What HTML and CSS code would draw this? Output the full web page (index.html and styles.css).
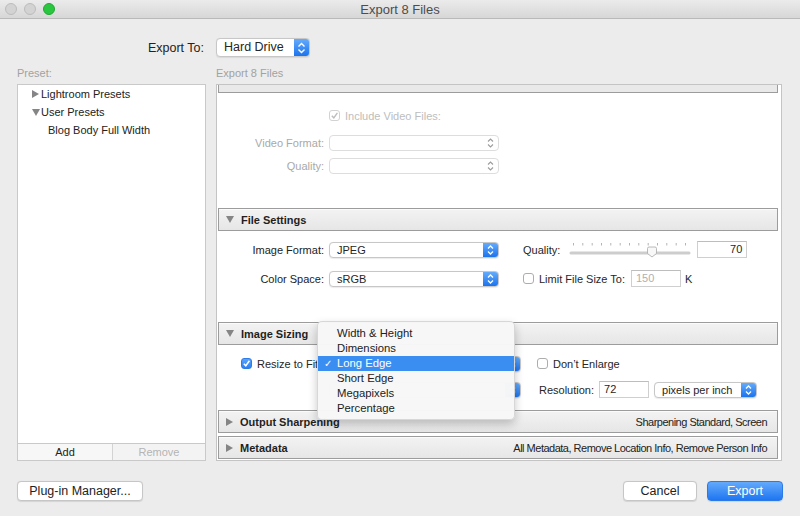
FILE: index.html
```html
<!DOCTYPE html>
<html>
<head>
<meta charset="utf-8">
<title>Export 8 Files</title>
<link rel="stylesheet" href="styles.css">
</head>
<body>
<div class="titlebar">
  <div class="lights"><span class="light"></span><span class="light"></span><span class="light green"></span></div>
  <div class="title">Export 8 Files</div>
  <div></div>
</div>

<div class="main">
  <div class="export-label">Export To:</div>
  <div class="popup big w-hd"><span class="val">Hard Drive</span><span class="step"><svg width="9" height="12" viewBox="0 0 9 12"><path d="M1.5 4.5 L4.5 1.5 L7.5 4.5 M1.5 7.5 L4.5 10.5 L7.5 7.5" fill="none" stroke="#fff" stroke-width="1.4"/></svg></span></div>

  <div class="col-label">Preset:</div>
  <div class="col-label">Export 8 Files</div>

  <div class="presets">
    <ul class="tree">
      <li><span class="tri tri-right"></span>Lightroom Presets</li>
      <li><span class="tri tri-down"></span>User Presets</li>
      <li class="leaf">Blog Body Full Width</li>
    </ul>
    <div class="listbtns"><div class="lbtn">Add</div><div class="lbtn dis">Remove</div></div>
  </div>

  <div class="panel">
    <div class="sec-head partial"></div>
    <div class="sec-body video">
      <div class="row">
        <span class="lab"></span>
        <span class="check dis-check"><svg width="9" height="9" viewBox="0 0 9 9"><path d="M1.8 4.8 L3.8 6.8 L7.4 1.8" fill="none" stroke="#bdbdbd" stroke-width="1.4"/></svg></span>
        <span class="dis-text cb-text">Include Video Files:</span>
      </div>
      <div class="row r-vf">
        <span class="lab dis-text">Video Format:</span>
        <div class="popup dis w-170"><span class="val"></span><span class="step"><svg width="9" height="12" viewBox="0 0 9 12"><path d="M2 4.5 L4.5 2 L7 4.5 M2 7.5 L4.5 10 L7 7.5" fill="none" stroke="#9c9c9c" stroke-width="1.1"/></svg></span></div>
      </div>
      <div class="row r-vq">
        <span class="lab dis-text">Quality:</span>
        <div class="popup dis w-170"><span class="val"></span><span class="step"><svg width="9" height="12" viewBox="0 0 9 12"><path d="M2 4.5 L4.5 2 L7 4.5 M2 7.5 L4.5 10 L7 7.5" fill="none" stroke="#9c9c9c" stroke-width="1.1"/></svg></span></div>
      </div>
    </div>

    <div class="sec-head"><span class="tri tri-down"></span><span class="h-title">File Settings</span></div>
    <div class="sec-body file">
      <div class="row">
        <span class="lab">Image Format:</span>
        <div class="popup w-170"><span class="val">JPEG</span><span class="step"><svg width="9" height="12" viewBox="0 0 9 12"><path d="M2 4.5 L4.5 2 L7 4.5 M2 7.5 L4.5 10 L7 7.5" fill="none" stroke="#fff" stroke-width="1.3"/></svg></span></div>
        <span class="q-lab">Quality:</span>
        <svg class="slider" width="122" height="17" viewBox="0 0 122 17">
          <g stroke="#b4b4b4" stroke-width="1">
            <line x1="4.5" y1="2" x2="4.5" y2="4.5"/><line x1="13.8" y1="2" x2="13.8" y2="4.5"/><line x1="23.2" y1="2" x2="23.2" y2="4.5"/><line x1="32.5" y1="2" x2="32.5" y2="4.5"/><line x1="41.8" y1="2" x2="41.8" y2="4.5"/><line x1="51.2" y1="2" x2="51.2" y2="4.5"/><line x1="60.5" y1="2" x2="60.5" y2="4.5"/><line x1="69.8" y1="2" x2="69.8" y2="4.5"/><line x1="79.2" y1="2" x2="79.2" y2="4.5"/><line x1="88.5" y1="2" x2="88.5" y2="4.5"/><line x1="97.8" y1="2" x2="97.8" y2="4.5"/><line x1="107.2" y1="2" x2="107.2" y2="4.5"/><line x1="116.5" y1="2" x2="116.5" y2="4.5"/>
          </g>
          <rect x="0.5" y="10.5" width="121" height="3" rx="1.5" fill="#cdcdcd"/>
          <path d="M78.5 7.5 Q78.5 6 80 6 L86 6 Q87.5 6 87.5 7.5 L87.5 12.5 L83 16 L78.5 12.5 Z" fill="#f8f8f8" stroke="#a8a8a8" stroke-width="0.8"/>
        </svg>
        <span class="field num">70</span>
      </div>
      <div class="row r-cs">
        <span class="lab">Color Space:</span>
        <div class="popup w-170"><span class="val">sRGB</span><span class="step"><svg width="9" height="12" viewBox="0 0 9 12"><path d="M2 4.5 L4.5 2 L7 4.5 M2 7.5 L4.5 10 L7 7.5" fill="none" stroke="#fff" stroke-width="1.3"/></svg></span></div>
        <span class="check limit-check"></span>
        <span class="cb-text">Limit File Size To:</span>
        <span class="field gray f-limit">150</span>
        <span class="k">K</span>
      </div>
    </div>

    <div class="sec-head"><span class="tri tri-down"></span><span class="h-title">Image Sizing</span></div>
    <div class="sec-body sizing">
      <div class="row">
        <span class="check on resize-check"><svg width="9" height="9" viewBox="0 0 9 9"><path d="M1.8 4.8 L3.8 6.8 L7.4 1.8" fill="none" stroke="#fff" stroke-width="1.5"/></svg></span>
        <span class="cb-text resize-text">Resize to Fit:</span>
        <div class="popup w-192"><span class="val"></span><span class="step"><svg width="9" height="12" viewBox="0 0 9 12"><path d="M2 4.5 L4.5 2 L7 4.5 M2 7.5 L4.5 10 L7 7.5" fill="none" stroke="#fff" stroke-width="1.3"/></svg></span></div>
        <span class="check enl-check"></span>
        <span class="cb-text">Don’t Enlarge</span>
      </div>
      <div class="row r-res">
        <span class="lab"></span>
        <div class="popup w-192"><span class="val"></span><span class="step"><svg width="9" height="12" viewBox="0 0 9 12"><path d="M2 4.5 L4.5 2 L7 4.5 M2 7.5 L4.5 10 L7 7.5" fill="none" stroke="#fff" stroke-width="1.3"/></svg></span></div>
        <span class="res-lab">Resolution:</span>
        <span class="field f-res">72</span>
        <div class="popup w-ppi"><span class="val">pixels per inch</span><span class="step"><svg width="9" height="12" viewBox="0 0 9 12"><path d="M2 4.5 L4.5 2 L7 4.5 M2 7.5 L4.5 10 L7 7.5" fill="none" stroke="#fff" stroke-width="1.3"/></svg></span></div>
      </div>
    </div>

    <div class="sec-head"><span class="tri tri-right"></span><span class="h-title">Output Sharpening</span><span class="h-sum">Sharpening Standard, Screen</span></div>
    <div class="sec-gap"></div>
    <div class="sec-head"><span class="tri tri-right"></span><span class="h-title">Metadata</span><span class="h-sum">All Metadata, Remove Location Info, Remove Person Info</span></div>
  </div>
</div>

<div class="footer">
  <div class="btn plug">Plug-in Manager...</div>
  <div class="btn-group">
    <div class="btn cancel">Cancel</div>
    <div class="btn primary">Export</div>
  </div>
</div>

<div class="menu">
  <div class="mi">Width &amp; Height</div>
  <div class="mi">Dimensions</div>
  <div class="mi active"><span class="tick">✓</span>Long Edge</div>
  <div class="mi">Short Edge</div>
  <div class="mi">Megapixels</div>
  <div class="mi">Percentage</div>
</div>
</body>
</html>
```

FILE: styles.css
```css
* { box-sizing: border-box; }
html, body { margin: 0; padding: 0; }
body {
  width: 800px;
  height: 516px;
  overflow: hidden;
  position: relative;
  background: #ececec;
  font-family: "Liberation Sans", Arial, sans-serif;
  font-size: 11px;
  color: #262626;
}

/* title bar */
.titlebar {
  height: 19px;
  border-bottom: 1px solid #b9b9b9;
  background: linear-gradient(#ebebeb, #d7d7d7);
  display: grid;
  grid-template-columns: 1fr auto 1fr;
  align-items: center;
}
.lights { display: flex; gap: 7px; padding-left: 5px; }
.light {
  width: 12px; height: 12px; border-radius: 50%;
  background: #d3d3d3; border: 1px solid #bcbcbc;
}
.light.green { background: #2bc63f; border-color: #22a633; }
.title { font-size: 13px; color: #4d4d4d; }

/* main grid */
.main {
  display: grid;
  grid-template-columns: 189px 566px;
  column-gap: 10px;
  padding: 19px 0 0 17px;
}
.export-label {
  font-size: 12.5px;
  text-align: right;
  padding-right: 2px;
  align-self: center;
  color: #222;
}
.col-label { margin-top: 9px; line-height: 14px; color: #a2a2a2; }

/* popups */
.popup {
  display: flex;
  height: 16px;
  background: #fff;
  border: 1px solid #c7c7c7;
  border-radius: 4px;
  overflow: hidden;
  box-shadow: 0 0.5px 1px rgba(0,0,0,0.08);
  flex: none;
}
.popup .val { flex: 1; padding-left: 7px; line-height: 14px; white-space: nowrap; overflow: hidden; }
.popup .step {
  width: 15px;
  background: linear-gradient(#64abfc, #1c73ee);
  display: flex; align-items: center; justify-content: center;
}
.popup.big { height: 19px; width: 94px; }
.popup.big .val { font-size: 12.5px; line-height: 17px; }
.popup.dis { border-color: #dddddd; box-shadow: none; }
.popup.dis .step { background: none; }
.w-170 { width: 170px; }
.w-192 { width: 192px; }
.w-ppi { width: 103px; margin-left: 5px; }

/* presets list */
.presets {
  margin-top: 4px;
  height: 377px;
  background: #fff;
  border: 1px solid #c9c9c9;
  display: flex;
  flex-direction: column;
}
.tree { list-style: none; margin: 0; padding: 0; flex: 1; }
.tree li { height: 18px; line-height: 18px; padding-left: 14px; display: flex; align-items: center; color: #222; }
.tree li.leaf { padding-left: 30px; }
.tri { display: inline-block; width: 0; height: 0; margin-right: 2px; }
.tri-right { border-top: 4px solid transparent; border-bottom: 4px solid transparent; border-left: 7px solid #858585; }
.tri-down { border-left: 4px solid transparent; border-right: 4px solid transparent; border-top: 7px solid #858585; margin-right: 1px; }
.listbtns {
  height: 17px;
  border-top: 1px solid #c9c9c9;
  display: grid;
  grid-template-columns: 94px 1fr;
}
.lbtn { text-align: center; line-height: 16px; background: #f7f7f7; color: #222; }
.lbtn.dis { color: #b4b4b4; border-left: 1px solid #d3d3d3; background: #f3f3f3; }

/* right panel */
.panel {
  margin-top: 4px;
  height: 377px;
  background: #fff;
  border: 1px solid #c4c4c4;
  padding: 0 3px 0 1px;
  display: flex;
  flex-direction: column;
  overflow: hidden;
}
.sec-head {
  height: 23px;
  flex: none;
  border: 1px solid #9c9c9c;
  background: linear-gradient(#f3f3f3, #e6e6e6);
  box-shadow: inset 0 1px 0 #fbfbfb;
  display: flex;
  align-items: center;
  padding: 0 10px 0 7px;
}
.sec-head.partial { height: 8px; border-top: none; box-shadow: none; background: #e9e9e9; }
.sec-head .tri { margin-right: 7px; }
.sec-head .tri-down { margin-right: 7px; }
.h-title { font-weight: bold; color: #1f1f1f; }
.h-sum { margin-left: auto; letter-spacing: -0.5px; color: #222; }
.sec-gap { height: 3px; flex: none; }

.sec-body { flex: none; }
.sec-body.video { height: 115px; padding-top: 14px; }
.sec-body.file { height: 91px; padding-top: 10px; }
.sec-body.sizing { height: 65px; padding-top: 10px; }

.row { display: flex; align-items: center; height: 17px; }
.r-vf { margin-top: 10px; }
.r-vq { margin-top: 6px; }
.r-cs { margin-top: 12px; }
.r-res { margin-top: 9px; }
.lab { width: 106px; text-align: right; margin-right: 5px; white-space: nowrap; color: #222; flex: none; }
.dis-text { color: #b5b5b5; }
.lab.dis-text { color: #a9a9a9; }

.check {
  width: 11px; height: 11px;
  border: 1px solid #adadad;
  border-radius: 3px;
  background: #fff;
  display: inline-flex; align-items: center; justify-content: center;
  flex: none;
}
.check.dis-check { border-color: #d2d2d2; }
.check.on { background: linear-gradient(#5aa4fb, #2a7ff2); border-color: #2f7be6; }
.cb-text { margin-left: 5px; white-space: nowrap; }
.cb-text.dis-text { color: #bdbdbd; }

.q-lab { margin-left: 24px; }
.slider { margin-left: 9px; flex: none; }
.field {
  height: 17px;
  border: 1px solid #cfcfcf;
  border-top-color: #bdbdbd;
  background: #fff;
  line-height: 15px;
  padding: 0 4px;
  flex: none;
}
.field.num { width: 50px; margin-left: 6px; text-align: right; }
.limit-check { margin-left: 24px; }
.field.gray { color: #b0b0b0; }
.f-limit { width: 50px; margin-left: 6px; }
.k { margin-left: 4px; }

.resize-check { margin-left: 23px; }
.resize-text { width: 72px; flex: none; }
.enl-check { margin-left: 16px; }
.res-lab { margin-left: 18px; }
.f-res { width: 50px; margin-left: 5px; }

/* footer */
.footer {
  display: flex;
  justify-content: space-between;
  padding: 20px 17px 0 17px;
}
.btn-group { display: flex; gap: 10px; }
.btn {
  height: 20px;
  line-height: 18px;
  font-size: 12.5px;
  text-align: center;
  background: #fff;
  border: 1px solid #c6c6c6;
  border-radius: 4px;
  box-shadow: 0 0.5px 1px rgba(0,0,0,0.1);
  color: #222;
}
.btn.plug { width: 126px; }
.btn.cancel { width: 74px; }
.btn.primary {
  width: 76px;
  color: #fff;
  background: linear-gradient(#63aafc, #1f76f1);
  border-color: #2b7ae8;
}

/* dropdown menu overlay */
.menu {
  position: absolute;
  left: 317px;
  top: 321px;
  width: 198px;
  padding: 4px 0 3px;
  background: rgba(247,247,247,0.98);
  border: 1px solid rgba(0,0,0,0.13);
  border-radius: 5px;
  box-shadow: 0 4px 10px rgba(0,0,0,0.22);
  z-index: 5;
}
.mi { height: 15px; line-height: 15px; padding-left: 19px; font-size: 11.3px; color: #222; position: relative; }
.mi.active { background: #3a8ef2; color: #fff; }
.tick { position: absolute; left: 6px; top: 0; font-family: "DejaVu Sans", sans-serif; font-size: 10px; }
```
